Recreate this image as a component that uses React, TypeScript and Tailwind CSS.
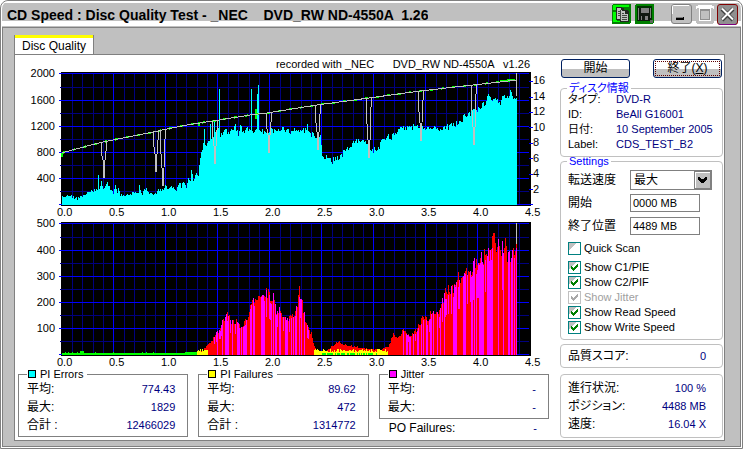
import type { ReactNode } from 'react';

type Point = [number, number];

// Shared plot geometry: the black field starts 2 units in, leaving room for ticks.
const PLOT_W = 474;
const PLOT_H = 134;
const LEFT = 2;
const RIGHT = 472;
const BASE = 133;
const DATA_END = 458;

const noise = (n: number) => {
  const v = Math.sin(n * 127.1 + 311.7) * 43758.5453;
  return v - Math.floor(v);
};

const sample = (points: Point[], x: number) => {
  for (let i = 1; i < points.length; i++) {
    const [x1, y1] = points[i];
    if (x <= x1) {
      const [x0, y0] = points[i - 1];
      return y0 + ((y1 - y0) * (x - x0)) / (x1 - x0 || 1);
    }
  }
  return points[points.length - 1][1];
};

const bar = (x: number, top: number, bottom = BASE) => `M${x} ${Math.round(top)}h1V${Math.round(bottom)}h-1z`;

const piErrors: Point[] = [
  [2, 115], [3, 124], [5, 125], [8, 122], [12, 124], [16, 127], [21, 125], [26, 123], [31, 120], [36, 118], [38, 119],
  [39, 102], [40, 118], [42, 110], [44, 117], [46, 114], [48, 111], [51, 118], [54, 121], [56, 114], [58, 121], [59, 115],
  [61, 123], [68, 123], [73, 121], [79, 120], [80, 114], [83, 122], [87, 115], [89, 121], [96, 122], [99, 118], [104, 118],
  [106, 114], [109, 117], [113, 115], [117, 119], [120, 110], [122, 115], [124, 110], [127, 115], [129, 106], [131, 108],
  [132, 98], [134, 108], [137, 102], [139, 105], [140, 93], [141, 84], [143, 78], [144, 73], [145, 55], [146, 76],
  [148, 71], [150, 70], [153, 66], [156, 61], [158, 56], [161, 64], [163, 62], [166, 59], [169, 61], [173, 58], [176, 54],
  [179, 62], [181, 56], [184, 60], [188, 56], [194, 58], [201, 58], [206, 60], [211, 58], [216, 60], [221, 57], [226, 58],
  [231, 60], [236, 59], [241, 58], [246, 58], [248, 55], [251, 61], [255, 64], [258, 70], [261, 65], [263, 84], [266, 86],
  [271, 85], [273, 89], [276, 85], [281, 86], [284, 80], [286, 78], [291, 75], [296, 69], [301, 68], [306, 71],
  [311, 78], [314, 78], [319, 75], [324, 68], [328, 64], [331, 66], [336, 60], [341, 58], [346, 55], [351, 56], [356, 53],
  [361, 54], [366, 55], [371, 54], [376, 56], [381, 58], [386, 56], [391, 54], [396, 52], [401, 50], [406, 43], [411, 41],
  [416, 38], [421, 35], [426, 31], [429, 22], [431, 28], [436, 26], [441, 31], [443, 24], [446, 23], [448, 27], [451, 21],
  [454, 26], [458, 23],
];

const piSpikes: Point[] = [[160, 17], [192, 17], [199, 13], [151, 52], [155, 50], [198, 22]];

const speed: Point[] = [
  [3, 81], [13, 78], [44, 70], [94, 60], [108, 57], [128, 53], [154, 49], [191, 43], [208, 41], [258, 33], [310, 26],
  [361, 19], [414, 13], [441, 10], [458, 8],
];

// Position and depth of each dip in the write speed curve.
const dips: Point[] = [[45, 106], [97, 100], [104, 114], [156, 92], [210, 81], [259, 78], [310, 86], [362, 69], [415, 73]];

const piFailures: Point[] = [
  [138, 130], [144, 128], [148, 122], [151, 120], [154, 116], [156, 112], [159, 108], [161, 106], [163, 98], [166, 94],
  [169, 93], [173, 100], [177, 97], [181, 103], [184, 101], [187, 96], [190, 90], [192, 79], [197, 73], [203, 75],
  [207, 69], [211, 74], [215, 72], [217, 87], [221, 86], [226, 97], [231, 94], [234, 92], [238, 82], [240, 66],
  [243, 80], [246, 98], [249, 107], [253, 114], [255, 124], [258, 129], [268, 128], [275, 122], [281, 120], [290, 124],
  [300, 125], [320, 128], [329, 124], [331, 122], [334, 110], [337, 116], [341, 112], [344, 104], [348, 112], [353, 112],
  [356, 109], [360, 102], [364, 92], [368, 100], [371, 93], [374, 86], [378, 90], [381, 86], [384, 74], [386, 69],
  [388, 64], [391, 64], [393, 64], [396, 66], [397, 54], [401, 57], [406, 52], [409, 45], [413, 43], [417, 39],
  [421, 38], [425, 29], [429, 24], [432, 24], [434, 12], [436, 18], [439, 22], [442, 24], [446, 27], [449, 30],
  [453, 28], [458, 25],
];

const buildFailures = () => {
  let red = '';
  let magenta = '';
  let yellow = '';
  let green = '';
  for (let x = 3; x < DATA_END; x++) {
    if (x < 138) {
      green += bar(x, x > 20 && x < 25 ? 129 : x > 125 || noise(x) > 0.92 ? 130 : 131);
      continue;
    }
    const top = sample(piFailures, x);
    const height = BASE - top;
    const jitter = noise(x) * noise(x + 40);
    red += bar(x, Math.min(131, top + height * 0.14 * (0.8 - jitter * 2)));
    if (x > 154 && (x < 250 || x > 343) && noise(x * 3) > 0.45) {
      magenta += bar(x, top + height * 0.22 * (noise(x + 9) - 0.25), noise(x + 5) > 0.25 ? BASE : BASE - height * 0.6);
    }
    if (x < 149 || (x > 254 && x < 329)) {
      yellow += bar(x, 127 + noise(x + 3) * 3);
    }
    if (x > 262 && x < 318 && noise(x + 7) > 0.3) {
      green += bar(x, 131);
    }
  }
  return { red, magenta, yellow, green };
};

const buildErrors = () => {
  let d = '';
  for (let x = 3; x < DATA_END; x++) {
    d += bar(x, sample(piErrors, x) + (noise(x) - 0.5) * (x > 140 ? 6 : 3));
  }
  piSpikes.forEach(([x, y]) => {
    d += bar(x, y);
  });
  return d;
};

const failures = buildFailures();
const errors = buildErrors();
const speedPath = speed.map(([x, y], i) => `${i ? 'L' : 'M'}${x} ${y}`).join('');
const dipPath = dips
  .map(([x, y]) => {
    const top = Math.round(sample(speed, x));
    return `M${x - 3} ${top}V${top + 9}L${x - 1} ${y - 18}L${x} ${y}L${x + 1} ${y - 18}L${x + 2} ${top + 9}V${top}`;
  })
  .join('');

const majorX = [54, 106, 158, 210, 262, 314, 366, 418];
const majorY = [1, 28, 54, 80, 106, 132];
const minorY = [15, 41, 67, 93, 119];
const minorX = [0, 1, 2, 3, 4, 5, 6, 7, 8].flatMap((i) => [13, 23, 34, 44].map((o) => i * 52 + o)).filter((x) => x < 470);

const Plot = ({ label, children }: { label: string; children: ReactNode }) => (
  <svg
    role="img"
    aria-label={label}
    viewBox={`0 0 ${PLOT_W} ${PLOT_H}`}
    preserveAspectRatio="none"
    shapeRendering="crispEdges"
    className="h-[134px] min-w-0 flex-1"
  >
    <rect x={LEFT} width={RIGHT - LEFT} height={PLOT_H} fill="#000" />
    <path
      fill="#000080"
      d={minorX.map((x) => `M${x} 1h1V133h-1z`).join('') + minorY.map((y) => `M1 ${y}H470v1H1z`).join('')}
    />
    <path
      fill="#0000ff"
      d={majorX.map((x) => `M${x} 1h1V133h-1z`).join('') + majorY.map((y) => `M0 ${y}H470v1H0z`).join('')}
    />
    {children}
  </svg>
);

const YLabels = ({ values }: { values: number[] }) => (
  <div className="-mt-[7px] w-[40px] shrink-0 pr-1 text-right text-[11px]">
    {values.map((v, i) => (
      <div key={v} className={i ? 'h-[26px] leading-4' : 'h-[27px] leading-4'}>
        {v}
      </div>
    ))}
  </div>
);

const XLabels = () => (
  <div className="flex h-3 pr-[15px] pl-[42px] text-[11px] leading-3">
    {['0.0', '0.5', '1.0', '1.5', '2.0', '2.5', '3.0', '3.5', '4.0'].map((v) => (
      <span key={v} className="min-w-0 flex-1">
        {v}
      </span>
    ))}
    <span className="w-[20px]">4.5</span>
  </div>
);

const Row = ({ label, value }: { label: string; value: string }) => (
  <div className="flex h-[18px] items-center justify-between">
    <span>{label}</span>
    <span className="text-[11px] text-[#000080]">{value}</span>
  </div>
);

type StatProps = {
  title: string;
  swatch: string;
  rows: [string, string][];
};

const Stat = ({ title, swatch, rows }: StatProps) => (
  <fieldset className="min-w-0 border border-[#808080] pr-3 pb-[2px] pl-2">
    <legend className="flex h-3 items-center gap-1 pr-1 pl-px text-[11px] leading-3">
      <span className={`size-2 border border-black ${swatch}`} />
      {title}
    </legend>
    {rows.map(([label, value]) => (
      <Row key={label} label={label} value={value} />
    ))}
  </fieldset>
);

const Group = ({ title, children }: { title: string; children: ReactNode }) => (
  <fieldset className="min-w-0 rounded border border-[#c0c0c0] px-[7px] pb-1">
    <legend className="-ml-px h-2 px-[2px] text-[11px] leading-2 text-[#0000ff]">{title}</legend>
    {children}
  </fieldset>
);

const DiscRow = ({ label, value }: { label: string; value: string }) => (
  <div className="flex h-[15px] items-center text-[11px]">
    <span className="w-12 shrink-0">{label}</span>
    <span className="whitespace-nowrap text-[#000080]">{value}</span>
  </div>
);

type CheckProps = {
  label: string;
  checked?: boolean;
  disabled?: boolean;
};

const Check = ({ label, checked, disabled }: CheckProps) => (
  <label className={`flex h-[15px] items-center gap-[3px] text-[11px] ${disabled ? 'text-[#a0a0a0]' : ''}`}>
    <span className="grid size-[13px]">
      <input
        type="checkbox"
        defaultChecked={checked}
        disabled={disabled}
        className="peer col-start-1 row-start-1 size-[13px] appearance-none border border-[#008080] bg-[linear-gradient(135deg,#c0c0c0_35%,#fff_35%)] disabled:border-[#c0c0c0] disabled:bg-none"
      />
      <svg
        viewBox="0 0 13 13"
        shapeRendering="crispEdges"
        className="pointer-events-none invisible col-start-1 row-start-1 size-[13px] text-[#008000] peer-checked:visible peer-disabled:text-[#a8a8a8]"
      >
        <path fill="currentColor" d="M3 5h1v1h1v1h1v-1h1v-1h1v-1h1v-1h1v3h-1v1h-1v1h-1v1h-1v1h-1v-1h-1v-1h-1z" />
      </svg>
    </span>
    {label}
  </label>
);

const XpButton = ({ children, focused }: { children: ReactNode; focused?: boolean }) => (
  <button
    type="button"
    className="h-[19px] w-[69px] rounded-[3px] border border-[#002060] bg-[linear-gradient(#fff_55%,#c0c0c0_55%)] p-px leading-[15px]"
  >
    <span className={`block h-full leading-[14px] ${focused ? 'outline outline-dotted -outline-offset-1 outline-[#600000]' : ''}`}>
      {children}
    </span>
  </button>
);

const TitleButtons = () => (
  <div className="flex shrink-0 items-center">
    <button type="button" aria-label="Copy" className="mr-1">
      <svg viewBox="0 0 19 20" shapeRendering="crispEdges" className="h-5 w-[19px]">
        <rect width="19" height="20" rx="2" fill="#008000" />
        <path fill="#00ff00" d="M1 1h16v2H4v3H1zM1 8h3v6h1v3h6v1H1z" />
        <path fill="#202820" d="M4 3h6v1h2v2h4v1h1v11H8v-2H4z" />
        <path fill="#c0c0c0" d="M5 4h4v2h1v9H5zM9 7h4v3h3v7H9z" />
        <path fill="#404840" d="M6 7h2v1H6zM6 9h2v1H6zM6 11h2v1H6zM10 9h2v1h-2zM10 11h5v1h-5zM10 13h5v1h-5zM10 15h5v1h-5zM8 6h1v10H8z" />
      </svg>
    </button>
    <button type="button" aria-label="Save" className="mr-[17px]">
      <svg viewBox="0 0 19 20" shapeRendering="crispEdges" className="h-5 w-[19px]">
        <rect width="19" height="20" rx="2" fill="#008000" />
        <rect x="2" y="2" width="15" height="15" fill="#003000" />
        <path fill="#101810" d="M3 4h13v13H3z" />
        <path fill="#808080" d="M3 4h1v12H3zM15 4h1v10h-1zM6 4h8v5H6zM6 12h7v4H6z" />
        <path fill="#101810" d="M7 12h3v4H7z" />
        <path fill="#606860" d="M15 16h3v3h-3z" />
      </svg>
    </button>
    <button type="button" aria-label="Minimize" className="mr-1">
      <svg viewBox="0 0 21 20" className="h-5 w-[21px]">
        <rect x=".5" y=".5" width="20" height="19" rx="2.5" fill="#c0c0c0" stroke="#808080" />
        <path d="M1.500 10V2.500Q1.500 1.500 2.500 1.500H18" fill="none" stroke="#fff" />
        <path d="M5 13h8v3H5z" fill="#000" />
        <path d="M5 13h7v1H5z" fill="#808080" />
      </svg>
    </button>
    <button type="button" aria-label="Maximize" disabled className="mr-[3px]">
      <svg viewBox="0 0 18 20" className="h-5 w-[18px]" shapeRendering="crispEdges">
        <rect y="1" width="18" height="19" rx="3" fill="#c0c0c0" />
        <path d="M0 5V2h2V1h14v1h2v3h-1V4H1v1z" fill="#fff" />
        <path d="M3 4h12v13H3zM4 7v9h10V7z" fill="#fff" fillRule="evenodd" />
        <path d="M4 5h10v11H4zM5 7v8h8V7z" fill="#909090" fillRule="evenodd" />
      </svg>
    </button>
    <button type="button" aria-label="Close">
      <svg viewBox="0 0 21 21" className="size-[21px]">
        <rect x=".5" y=".5" width="20" height="20" rx="2.500" fill="#909090" stroke="#800000" />
        <path d="M2 20.500H19" stroke="#800080" />
        <path d="M5 5L16 16M16 5L5 16" stroke="#404040" strokeWidth="4" />
        <path d="M5 4.500L16 15.500M16 4.500L5 15.500" stroke="#fff" strokeWidth="2" />
      </svg>
    </button>
  </div>
);

const App = () => {
  return (
    <div className="flex min-h-screen flex-col rounded-t-lg border border-[#808080] bg-white px-px pb-px font-['Liberation_Sans','Noto_Sans_CJK_JP',sans-serif] text-xs text-black [font-feature-settings:'palt']">
      <header className="flex h-[27px] items-center justify-between rounded-t-lg border-b border-[#808080] bg-[linear-gradient(#fff_2px,#c0c0c0_2px,#c0c0c0_20px,#fff_20px,#fff_25px,#c0c0c0_25px)] pr-[3px] pl-[5px]">
        <h1 className="overflow-hidden pt-px text-sm font-bold whitespace-pre">
          {'CD Speed : Disc Quality Test - _NEC    DVD_RW ND-4550A  1.26'}
        </h1>
        <TitleButtons />
      </header>

      <main className="flex flex-1 flex-col border-x border-b border-[#808080] bg-[#c0c0c0] pt-[7px] pr-[15px] pb-[5px] pl-[11px]">
        <div role="tablist" className="flex">
          <button
            type="button"
            role="tab"
            aria-selected="true"
            className="-mb-px h-5 border-r border-l border-[#808080] bg-white px-[7px] pt-[2px] leading-4 shadow-[inset_0_3px_#ffff00]"
          >
            <span className="relative">Disc Quality</span>
          </button>
        </div>

        <div className="flex flex-1 border border-[#808080] bg-white">
          <section className="min-w-0 flex-1">
            <div className="h-[17px] pr-[30px] text-right text-[11px] leading-[18px] whitespace-pre">
              {'recorded with _NEC      DVD_RW ND-4550A   v1.26'}
            </div>
            <div className="flex h-[134px] pl-1">
              <YLabels values={[2000, 1600, 1200, 800, 400]} />
              <Plot label="PI Errors and speed">
                <path
                  fill="#0000ff"
                  d={[9, 25, 40, 55, 71, 86, 102, 117].map((y) => `M470 ${y}h4v1h-4z`).join('') + 'M470 132h4v1h-4z'}
                />
                <path fill="#00ffff" d={errors} />
                <path d={speedPath} fill="none" stroke="#00ff00" strokeWidth="2" strokeDasharray="3 8" />
                <path d="M3 81v4M197 37v10M140 50v4M441 9L456 8" stroke="#00ff00" strokeWidth="2" />
                <path d={speedPath} fill="none" stroke="#c0c0c0" strokeWidth="1" />
                <path d={dipPath} fill="none" stroke="#c0c0c0" />
                <path d="M457 1h1v23h-1z" fill="#c0c0c0" />
              </Plot>
              <div className="flex h-[125px] w-[27px] shrink-0 flex-col pt-px text-[11px]">
                {[16, 14, 12, 10, 8, 6, 4, 2].map((v) => (
                  <span key={v} className="flex flex-1 items-center">
                    {v}
                  </span>
                ))}
              </div>
            </div>
            <XLabels />
            <div className="mt-1 flex h-[134px] pl-1">
              <YLabels values={[500, 400, 300, 200, 100]} />
              <Plot label="PI Failures">
                <path fill="#ff0000" d={failures.red} />
                <path fill="#ff00ff" d={failures.magenta} />
                <path fill="#ffff00" d={failures.yellow} />
                <path fill="#00ff00" d={failures.green} />
                <path d="M457 1h1v21h-1z" fill="#c0c0c0" />
              </Plot>
              <div className="w-[27px] shrink-0" />
            </div>
            <XLabels />
            <div className="grid grid-cols-3 gap-[10px] pr-[11px] pl-[3px]">
              <Stat
                title="PI Errors"
                swatch="bg-[#00ffff]"
                rows={[['平均:', '774.43'], ['最大:', '1829'], ['合計 :', '12466029']]}
              />
              <Stat
                title="PI Failures"
                swatch="bg-[#ffff00]"
                rows={[['平均:', '89.62'], ['最大:', '472'], ['合計 :', '1314772']]}
              />
              <div>
                <Stat title="Jitter" swatch="bg-[#ff00ff]" rows={[['平均:', '-'], ['最大:', '-']]} />
                <div className="pr-3 pl-[10px]">
                  <Row label="PO Failures:" value="-" />
                </div>
              </div>
            </div>
          </section>

          <aside className="mr-px w-[163px] shrink-0">
            <div className="mt-1 mb-[6px] flex justify-between px-px">
              <XpButton>開始</XpButton>
              <XpButton focused>
                終了(<span className="underline">X</span>)
              </XpButton>
            </div>

            <Group title="ディスク情報">
              <DiscRow label="タイプ:" value="DVD-R" />
              <DiscRow label="ID:" value="BeAll G16001" />
              <DiscRow label="日付:" value="10 September 2005" />
              <DiscRow label="Label:" value="CDS_TEST_B2" />
            </Group>

            <Group title="Settings">
              <div className="mt-[5px] flex h-5 items-center">
                <label htmlFor="speed" className="w-[62px]">
                  転送速度
                </label>
                <div className="grid">
                  <select
                    id="speed"
                    className="col-start-1 row-start-1 h-5 w-[82px] appearance-none border border-[#808080] bg-white pl-[3px]"
                  >
                    <option>最大</option>
                  </select>
                  <svg
                    viewBox="0 0 17 18"
                    shapeRendering="crispEdges"
                    className="pointer-events-none col-start-1 row-start-1 mr-px h-[18px] w-[17px] self-center justify-self-end"
                  >
                    <rect width="17" height="18" fill="#808080" />
                    <rect x="1" y="1" width="15" height="16" fill="#fff" />
                    <rect x="2" y="2" width="14" height="15" fill="#c0c0c0" />
                    <path d="M4 6h2v1h1v1h3V7h1V6h2v3h-1v1h-1v1h-1v1H7v-1H6v-1H5V9H4z" />
                  </svg>
                </div>
              </div>
              <div className="mt-1 flex h-[18px] items-center">
                <label htmlFor="start" className="w-[62px]">
                  開始
                </label>
                <input id="start" defaultValue="0000 MB" className="h-[18px] w-[70px] border border-[#808080] px-[2px] text-[11px]" />
              </div>
              <div className="mt-[5px] mb-[6px] flex h-[18px] items-center">
                <label htmlFor="end" className="w-[62px]">
                  終了位置
                </label>
                <input id="end" defaultValue="4489 MB" className="h-[18px] w-[70px] border border-[#808080] px-[2px] text-[11px]" />
              </div>
              <Check label="Quick Scan" />
              <div className="mt-1">
                <Check label="Show C1/PIE" checked />
                <Check label="Show C2/PIF" checked />
                <Check label="Show Jitter" checked disabled />
                <Check label="Show Read Speed" checked />
                <Check label="Show Write Speed" checked />
              </div>
            </Group>

            <div className="mt-1 rounded border border-[#c0c0c0] py-[2px] pr-4 pl-[7px]">
              <Row label="品質スコア:" value="0" />
            </div>

            <div className="mt-[6px] rounded border border-[#c0c0c0] py-1 pr-4 pl-[7px]">
              <Row label="進行状況:" value="100 %" />
              <Row label="ポジション:" value="4488 MB" />
              <Row label="速度:" value="16.04 X" />
            </div>
          </aside>
        </div>
      </main>
    </div>
  );
};

export default App;
